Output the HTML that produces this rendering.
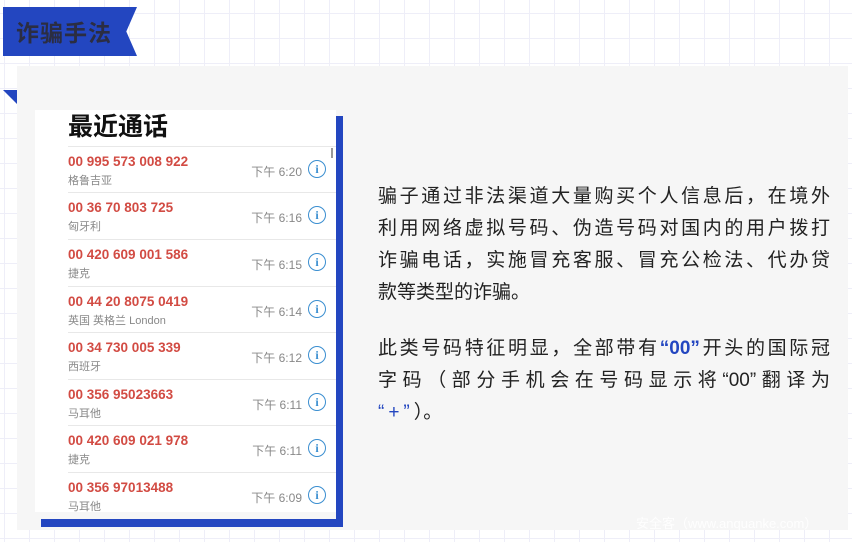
<!DOCTYPE html><html><head><meta charset="utf-8"><style>
body{margin:0;width:852px;height:542px;overflow:hidden;position:relative;font-family:"Liberation Sans","Noto Sans CJK SC",sans-serif;
background-color:#fff;background-image:linear-gradient(#eeeef8 1px,transparent 1px),linear-gradient(90deg,#eeeef8 1px,transparent 1px);background-size:25px 25px;background-position:4px 13px}
.ab{position:absolute}
.banner{left:3px;top:7px;width:134px;height:49px;background:#2346c0;clip-path:polygon(0 0,100% 0,92% 50%,100% 100%,0 100%)}
.bt{left:16px;top:14px;font-size:23px;font-weight:bold;color:#2b2d42;letter-spacing:1px}
.panel{left:17px;top:66px;width:831px;height:464px;background:#f6f6f6}
.tri{left:3px;top:90px;width:14px;height:14px;background:#2346c0;clip-path:polygon(0 0,100% 0,100% 100%)}
.phone{left:35px;top:110px;width:301px;height:402px;background:#fff;overflow:hidden}
.h{position:absolute;left:33px;top:-3px;font-size:25px;font-weight:bold;color:#111}
.row{position:absolute;left:33px;width:268px;height:46px;border-top:1px solid #e8e8e8}
.num{position:absolute;left:0;top:7px;font-size:13.5px;font-weight:bold;color:#d24b43}
.c{position:absolute;left:0;top:25px;font-size:11px;color:#888}
.t{position:absolute;right:34px;top:16px;font-size:12px;color:#888}
.i{position:absolute;right:10px;top:13px;width:16px;height:16px;border:1.5px solid #3a8ed0;border-radius:50%;color:#3a8ed0;font:bold 12px "Liberation Serif",serif;text-align:center;line-height:16px}
.txt{left:378px;width:452px;font-size:19px;color:#222;line-height:32px}
.txt div{text-align:justify;text-align-last:justify;height:32px}
b.bl{color:#2346c0}
</style></head><body>
<div class="ab banner"></div><div class="ab bt">诈骗手法</div>
<div class="ab panel"></div><div class="ab tri"></div>
<div class="ab" style="left:336px;top:116px;width:7px;height:411px;background:#2346c0"></div>
<div class="ab" style="left:41px;top:519px;width:302px;height:8px;background:#2346c0"></div>
<div class="ab phone">
<div class="h">最近通话</div>
<div class="ab" style="left:296px;top:38px;width:2px;height:10px;background:#999"></div>
<div class="row" style="top:36px"><div class="num">00 995 573 008 922</div><div class="c">格鲁吉亚</div><div class="t">下午 6:20</div><div class="i">i</div></div>
<div class="row" style="top:82px"><div class="num">00 36 70 803 725</div><div class="c">匈牙利</div><div class="t">下午 6:16</div><div class="i">i</div></div>
<div class="row" style="top:129px"><div class="num">00 420 609 001 586</div><div class="c">捷克</div><div class="t">下午 6:15</div><div class="i">i</div></div>
<div class="row" style="top:176px"><div class="num">00 44 20 8075 0419</div><div class="c">英国 英格兰 London</div><div class="t">下午 6:14</div><div class="i">i</div></div>
<div class="row" style="top:222px"><div class="num">00 34 730 005 339</div><div class="c">西班牙</div><div class="t">下午 6:12</div><div class="i">i</div></div>
<div class="row" style="top:269px"><div class="num">00 356 95023663</div><div class="c">马耳他</div><div class="t">下午 6:11</div><div class="i">i</div></div>
<div class="row" style="top:315px"><div class="num">00 420 609 021 978</div><div class="c">捷克</div><div class="t">下午 6:11</div><div class="i">i</div></div>
<div class="row" style="top:362px"><div class="num">00 356 97013488</div><div class="c">马耳他</div><div class="t">下午 6:09</div><div class="i">i</div></div>
</div>
<div class="ab txt" style="top:181px">
<div>骗子通过非法渠道大量购买个人信息后，在境外</div>
<div>利用网络虚拟号码、伪造号码对国内的用户拨打</div>
<div>诈骗电话，实施冒充客服、冒充公检法、代办贷</div>
<div style="text-align-last:left;letter-spacing:0">款等类型的诈骗。</div>
</div>
<div class="ab txt" style="top:333px">
<div>此类号码特征明显，全部带有<b class="bl">“00”</b>开头的国际冠</div>
<div>字码（部分手机会在号码显示将“00”翻译为</div>
<div style="text-align-last:left"><span style="color:#2346c0;letter-spacing:4px">“+”</span>）。</div>
</div>
<div class="ab" style="left:636px;top:513px;font-size:13px;color:#fff;opacity:.9">安全客（www.anquanke.com）</div>
</body></html>
